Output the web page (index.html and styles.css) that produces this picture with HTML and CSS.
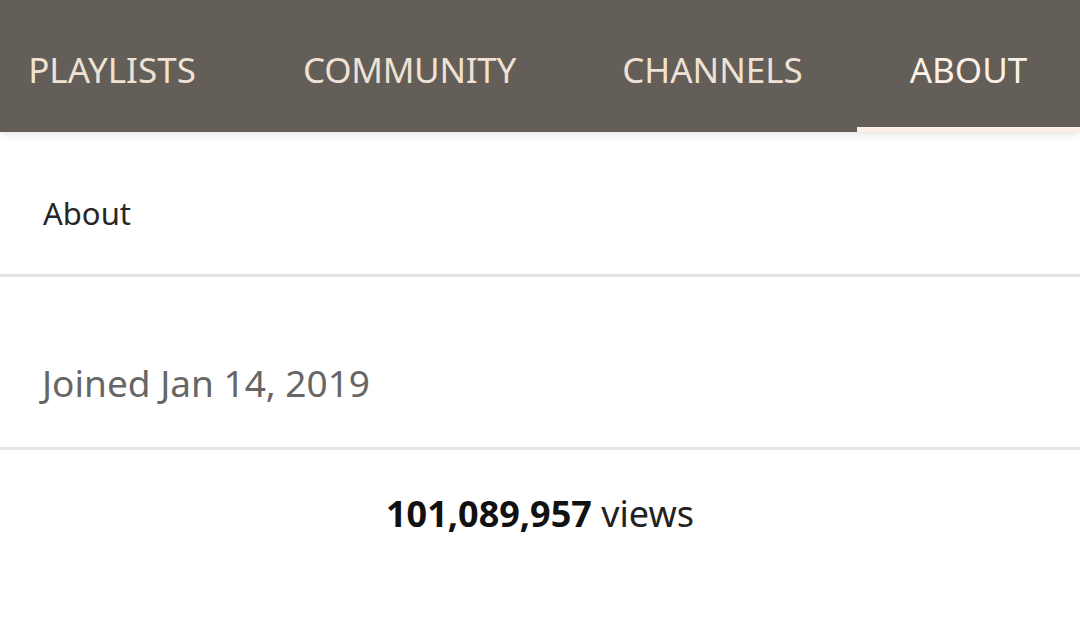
FILE: index.html
```html
<!DOCTYPE html>
<html>
<head>
<meta charset="utf-8">
<link rel="stylesheet" href="styles.css">
</head>
<body>
<header class="tabbar">
  <nav class="tabs">
    <div class="tab tab-playlists">PLAYLISTS</div>
    <div class="tab tab-community">COMMUNITY</div>
    <div class="tab tab-channels">CHANNELS</div>
    <div class="tab tab-about active">ABOUT</div>
  </nav>
</header>
<main class="content">
  <section class="sec sec-title"><h2 class="title">About</h2></section>
  <section class="sec sec-joined"><p class="joined">Joined Jan 14, 2019</p></section>
  <section class="sec sec-views"><p class="views"><b class="num">101,089,957</b> views</p></section>
</main>
</body>
</html>
```

FILE: styles.css
```css
html, body {
  margin: 0;
  padding: 0;
  background: #ffffff;
  font-family: "Noto Sans", "Open Sans", sans-serif;
  overflow: hidden;
}
.tabbar {
  height: 132px;
  background: #635e57;
  overflow: hidden;
  position: relative;
  z-index: 1;
  box-shadow: 0 3px 8px rgba(0,0,0,0.10);
}
.tabs {
  display: flex;
  height: 132px;
  margin-left: -27px;
}
.tab {
  flex: none;
  position: relative;
  display: flex;
  align-items: center;
  justify-content: center;
  height: 132px;
  box-sizing: border-box;
  padding-top: 6px;
  font-size: 35px;
  color: #efe2d5;
  line-height: 1;
  white-space: nowrap;
}
.tab-playlists { width: 278px; }
.tab-community { width: 317px; letter-spacing: -0.3px; }
.tab-channels { width: 289px; }
.tab-about { width: 223px; }
.tab.active {
  color: #fdf1e7;
}
.tab.active::after {
  content: "";
  position: absolute;
  left: 0;
  right: 0;
  bottom: 0;
  height: 5px;
  background: #fdefe5;
}
.content {
  display: flex;
  flex-direction: column;
}
.sec {
  border-bottom: 3px solid #e4e4e4;
  box-sizing: border-box;
}
.sec-title {
  height: 145px;
  padding: 61px 0 0 43px;
}
.title {
  margin: 0;
  font-weight: 400;
  font-size: 31px;
  line-height: 40px;
  color: #262626;
}
.sec-joined {
  height: 173px;
  padding: 84px 0 0 42px;
}
.joined {
  margin: 0;
  font-size: 37px;
  line-height: 44px;
  color: #666666;
}
.sec-views {
  border-bottom: none;
  padding-top: 42px;
  text-align: center;
}
.views {
  margin: 0;
  font-size: 36px;
  line-height: 44px;
  color: #222222;
}
.num {
  font-weight: 700;
  color: #111111;
}
```
